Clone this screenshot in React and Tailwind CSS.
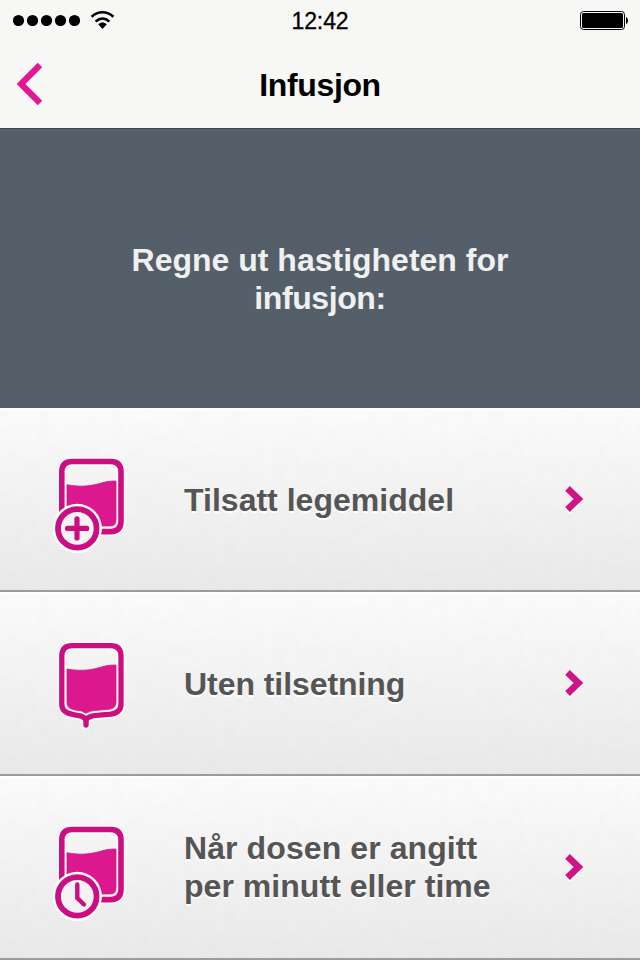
const items = [
  { icon: 'plus', lines: ['Tilsatt legemiddel'], spacing: ['tracking-[0.02px]'] },
  { icon: 'drip', lines: ['Uten tilsetning'], spacing: ['tracking-[-0.06px]'] },
  { icon: 'clock', lines: ['Når dosen er angitt', 'per minutt eller time'], spacing: ['tracking-[0.09px]', 'tracking-[0.04px]'] },
]

function StatusBar() {
  return (
    <div className="grid h-10 grid-cols-3 items-center">
      <div className="flex items-center pl-[13px]">
        <svg width="68" height="12" viewBox="0 0 68 12">
          {[5.5, 19.5, 33.5, 47.5, 61.5].map((cx) => (
            <circle key={cx} cx={cx} cy="6.5" r="5.6" />
          ))}
        </svg>
        <svg className="ml-[9px]" width="26" height="20" viewBox="0 0 26 20" fill="none" stroke="#000" strokeWidth="2.6">
          <path d="M1.6 6.8C8 .8 17 .8 23.4 6.8" />
          <path d="M5.6 11.6C9.8 7.6 15.2 7.6 19.4 11.6" />
          <path d="M8.2 14.2C11 11.8 14 11.8 16.8 14.2L12.5 18.9Z" fill="#000" stroke="none" />
        </svg>
      </div>
      <div className="pt-[2px] text-center text-[23px] leading-none tracking-[-0.1px] [-webkit-text-stroke:0.3px_#000]">12:42</div>
      <div className="flex justify-end pr-[11px]">
        <svg width="50" height="20" viewBox="0 0 50 20">
          <rect x="1.5" y="1.5" width="44" height="18" rx="3" fill="none" stroke="#000" />
          <rect x="3" y="3" width="41" height="15" rx="1.5" />
          <path d="M47 7c2.7 1 2.7 6 0 7z" />
        </svg>
      </div>
    </div>
  )
}

function Header() {
  return (
    <header className="h-32 bg-[#f7f7f5] text-black">
      <StatusBar />
      <div className="grid h-[88px] grid-cols-[100px_1fr_100px] items-center">
        <button type="button" aria-label="Tilbake" className="pl-4">
          <svg width="28" height="44" viewBox="0 0 28 44" fill="none" stroke="#e21795" strokeWidth="6.2">
            <path d="M24 3L5 22L24 41" />
          </svg>
        </button>
        <h1 className="pt-[2px] text-center text-[32px] leading-9 font-bold tracking-[-0.35px]">Infusjon</h1>
      </div>
    </header>
  )
}

function BagIcon({ type }) {
  const drip = type === 'drip'
  const outline = drip
    ? 'M72.3 53.7H110.5Q121 53.7 121 64.2V112Q121 120.5 111 122.2L99 123.2Q90 123.6 86 127Q82 123.6 76 123.2L72 122.2Q61.8 120.5 61.8 112V64.2Q61.8 53.7 72.3 53.7Z'
    : 'M72.3 53.5H110.5Q121 53.5 121 64V113Q121 123.6 110.5 123.6H72.3Q61.8 123.6 61.8 113V64Q61.8 53.5 72.3 53.5Z'
  const liquid = drip
    ? 'M67 77C84 80 95 77 105 74Q112 72.7 116 73V110.5Q116 116.5 109 117.3L98 118.2Q90 118.4 86 121.3Q82 118.4 76 118.2L74 117.8Q67 116.5 67 110.5Z'
    : 'M67 76.7C84 80 95 77 105 74Q112 72.7 116 73V112Q116 118 110 118H67Z'

  return (
    <svg width="88" height="108" viewBox="48 44 88 108" fill="none" className="shrink-0">
      <path d={outline} stroke="#fff" strokeWidth="8.4" />
      {drip && <path d="M86 126V133.6" stroke="#fff" strokeWidth="8" strokeLinecap="round" />}
      <path d={liquid} fill="#dc188e" stroke="#c9127f" strokeWidth=".7" />
      <path d={outline} stroke="#cb0f83" strokeWidth={drip ? 5.3 : 5.6} />
      {drip && <path d="M86 127V133" stroke="#cb0f83" strokeWidth="5.4" strokeLinecap="round" />}
      {!drip && (
        <>
          <circle cx="77.3" cy="120.4" r="24.6" fill="#fff" />
          <circle cx="77.3" cy="120.4" r="19.3" fill="#f3f3f3" stroke="#cb0f83" strokeWidth="5.8" />
        </>
      )}
      {type === 'plus' && (
        <path d="M67.5 120.4H86.7M77 110.8V130" stroke="#cb0f83" strokeWidth="5.2" strokeLinecap="round" />
      )}
      {type === 'clock' && (
        <path d="M77.3 108.4V122L84 128.5" stroke="#cb0f83" strokeWidth="4.4" strokeLinecap="round" />
      )}
    </svg>
  )
}

function Texture() {
  return (
    <svg className="pointer-events-none absolute inset-0 h-full w-full opacity-5">
      <filter id="paper">
        <feTurbulence type="fractalNoise" baseFrequency="0.08" numOctaves="4" seed="4" />
        <feColorMatrix values="0 0 0 0 .5  0 0 0 0 .5  0 0 0 0 .5  1.6 0 0 0 -.6" />
      </filter>
      <rect width="100%" height="100%" filter="url(#paper)" />
    </svg>
  )
}

function MenuRow({ item }) {
  return (
    <button
      type="button"
      className="relative flex h-[184px] w-full items-center border-t-2 border-b-2 border-t-white border-b-[#989ba3] bg-linear-to-b from-[#fbfbfb] to-[#e9e9e9] pl-12 text-left"
    >
      <Texture />
      <span className="relative flex h-[180px] items-start pt-[42px]">
        <BagIcon type={item.icon} />
      </span>
      <span
        className={`relative ml-12 flex-1 text-[32px] leading-[38px] font-bold text-[#555] [text-shadow:0_2px_0_#fff] ${
          item.lines.length > 1 ? 'pb-[2px]' : ''
        }`}
      >
        {item.lines.map((line, i) => (
          <span key={line} className={`block whitespace-nowrap ${item.spacing[i]}`}>{line}</span>
        ))}
      </span>
      <svg className="relative mr-[53px]" width="24" height="32" viewBox="0 0 24 32" fill="none">
        <path d="M4.5 5.5L15.5 16L4.5 26.5" stroke="#fff" strokeWidth="6.4" transform="translate(0 1)" />
        <path d="M4.5 4.5L15.5 15L4.5 25.5" stroke="#cf1586" strokeWidth="6.6" />
      </svg>
    </button>
  )
}

export default function App() {
  return (
    <div className="flex h-[960px] w-[640px] flex-col overflow-hidden bg-white font-['Liberation_Sans',Arial,sans-serif]">
      <Header />
      <section className="flex h-[280px] items-center justify-center border-t border-[#3e4751] bg-[#555f69] pt-[21px]">
        <p className="text-center text-[32px] leading-[38px] font-bold text-[#f0f0f0]">
          <span className="block">Regne ut hastigheten for</span>
          <span className="block tracking-[-0.4px]">infusjon:</span>
        </p>
      </section>
      <main>
        {items.map((item) => (
          <MenuRow key={item.icon} item={item} />
        ))}
      </main>
    </div>
  )
}
